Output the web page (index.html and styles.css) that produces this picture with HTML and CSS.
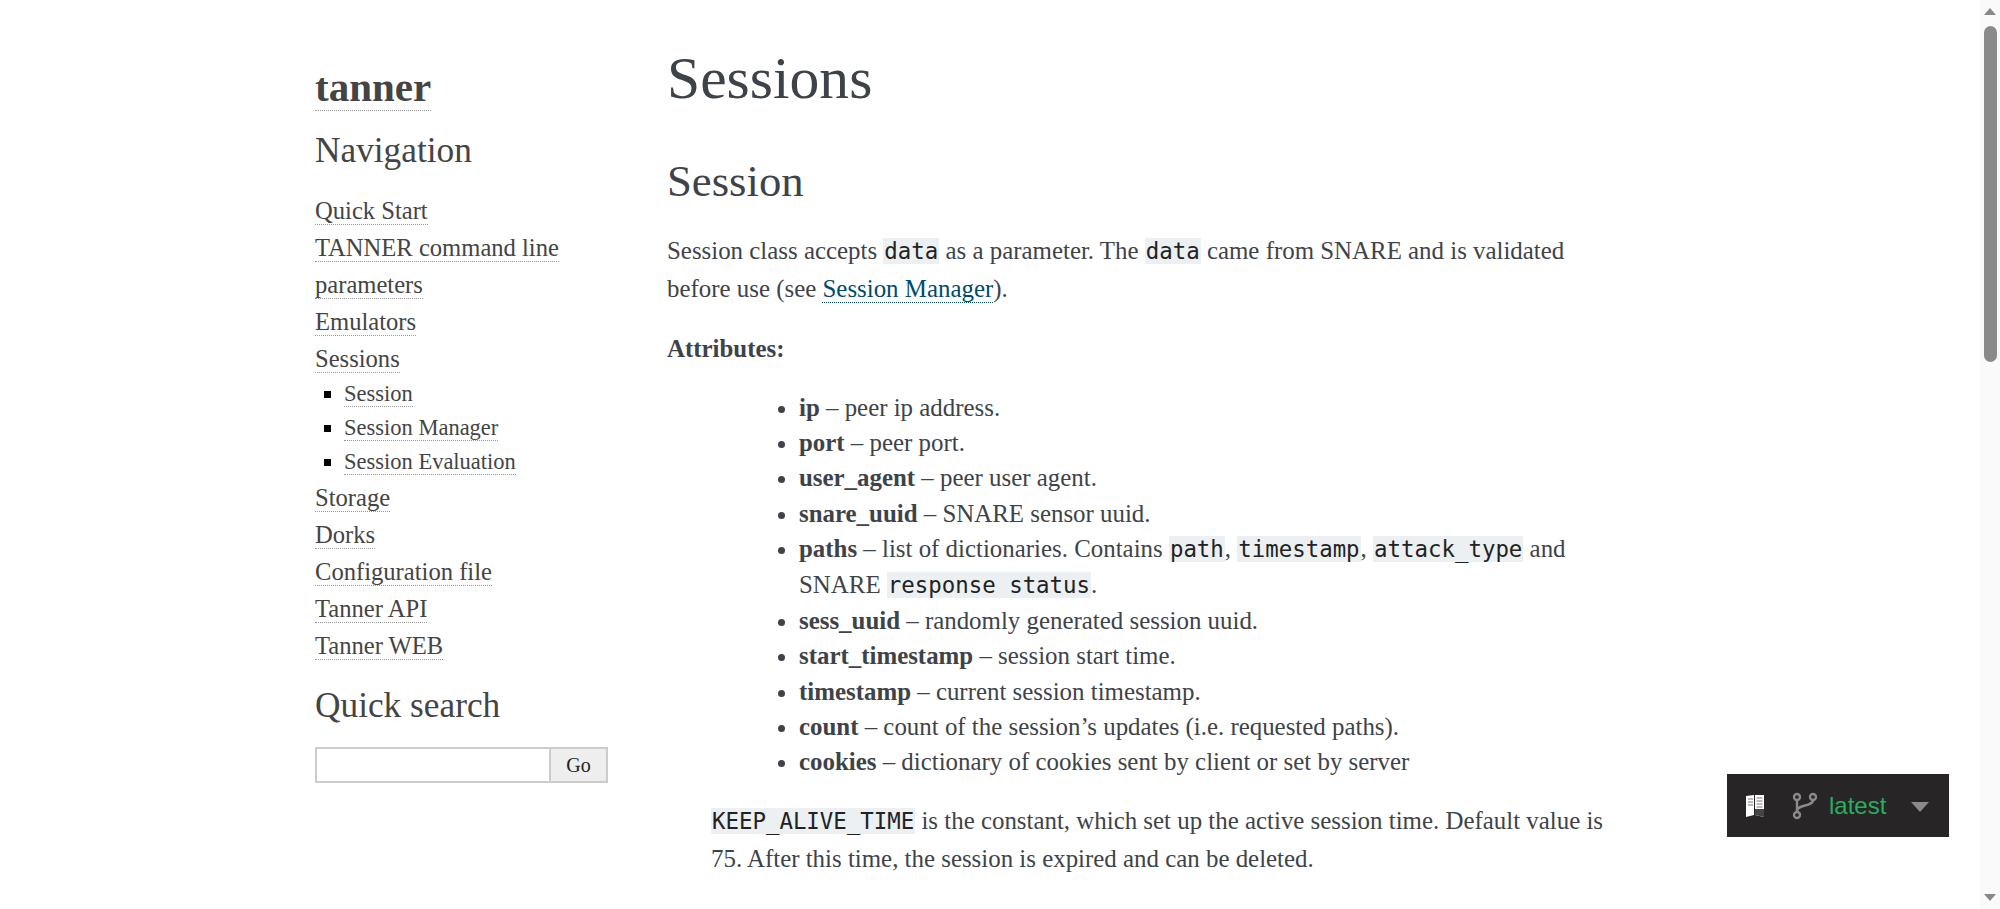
FILE: index.html
```html
<!DOCTYPE html>
<html lang="en">
  <head>
    <meta charset="UTF-8" />
    <title>Sessions — tanner</title>
    <link rel="stylesheet" href="styles.css">
  </head>
  <body>
    <div class="document">
      <div class="sidebar">
        <h1 class="logo"><a href="#">tanner</a></h1>
        <h3 class="nav-title">Navigation</h3>
        <ul class="nav">
          <li><a href="#">Quick Start</a></li>
          <li><a href="#">TANNER command line parameters</a></li>
          <li><a href="#">Emulators</a></li>
          <li>
            <a href="#">Sessions</a>
            <ul class="subnav">
              <li><a href="#">Session</a></li>
              <li><a href="#">Session Manager</a></li>
              <li><a href="#">Session Evaluation</a></li>
            </ul>
          </li>
          <li><a href="#">Storage</a></li>
          <li><a href="#">Dorks</a></li>
          <li><a href="#">Configuration file</a></li>
          <li><a href="#">Tanner API</a></li>
          <li><a href="#">Tanner WEB</a></li>
        </ul>
        <h3 class="search-title">Quick search</h3>
        <form class="search">
          <input type="text" />
          <button type="button">Go</button>
        </form>
      </div>
      <div class="body">
        <h1>Sessions</h1>
        <h2>Session</h2>
        <p>Session class accepts <code>data</code> as a parameter. The <code>data</code> came from SNARE and is validated before use (see <a class="ref" href="#">Session Manager</a>).</p>
        <p><strong>Attributes:</strong></p>
        <ul class="attrs">
          <li><strong>ip</strong> – peer ip address.</li>
          <li><strong>port</strong> – peer port.</li>
          <li><strong>user_agent</strong> – peer user agent.</li>
          <li><strong>snare_uuid</strong> – SNARE sensor uuid.</li>
          <li><strong>paths</strong> – list of dictionaries. Contains <code>path</code>, <code>timestamp</code>, <code>attack_type</code> and SNARE <code>response status</code>.</li>
          <li><strong>sess_uuid</strong> – randomly generated session uuid.</li>
          <li><strong>start_timestamp</strong> – session start time.</li>
          <li><strong>timestamp</strong> – current session timestamp.</li>
          <li><strong>count</strong> – count of the session’s updates (i.e. requested paths).</li>
          <li><strong>cookies</strong> – dictionary of cookies sent by client or set by server</li>
        </ul>
        <p class="note"><code>KEEP_ALIVE_TIME</code> is the constant, which set up the active session time. Default value is 75. After this time, the session is expired and can be deleted.</p>
      </div>
    </div>

    <div class="flyout">
      <svg class="icon-book" width="22" height="26" viewBox="0 0 22 26">
        <path d="M2 3 L10 2 V22 L2 24 Z" fill="#fff"/>
        <path d="M11 2 L20 2 V24 L11 22 Z" fill="#fff"/>
        <path d="M4 6h5M4 9h5M4 12h5M12.5 5h6M12.5 8h6M12.5 11h6M12.5 14h6" stroke="#777" stroke-width="1.2"/>
        <path d="M11 16 L20 16 V24 L11 22 Z" fill="#444"/>
      </svg>
      <svg class="icon-branch" width="26" height="28" viewBox="0 0 26 28" fill="none" stroke="#8a8a8a" stroke-width="2.4">
        <circle cx="5" cy="5" r="3"/>
        <circle cx="21" cy="5" r="3"/>
        <circle cx="5" cy="23" r="3"/>
        <path d="M5 8 V20"/>
        <path d="M21 8 C21 15 5 12 5 19"/>
      </svg>
      <span class="version">latest</span>
      <span class="caret"></span>
    </div>

    <div class="scrollbar">
      <span class="arrow-up"></span>
      <span class="thumb"></span>
      <span class="arrow-down"></span>
    </div>
  </body>
</html>
```

FILE: styles.css
```css
html,
body {
  height: 100%;
  overflow: hidden;
}
body {
  margin: 0;
  background-color: #fff;
  color: #3e4349;
  font-family: "Liberation Serif", serif;
  font-size: 24.9px;
}
a {
  color: #444;
  text-decoration: none;
  border-bottom: 1px dotted #999;
}
.document {
  display: flex;
  width: 1300px;
  margin-left: 315px;
}
.sidebar {
  width: 352px;
  flex: none;
  padding-top: 64px;
  color: #444;
  font-size: 24.6px;
}
.logo {
  margin: 0;
  font-size: 41px;
  line-height: 46px;
  font-weight: bold;
}
.nav-title,
.search-title {
  margin: 0;
  font-size: 35.3px;
  font-weight: normal;
  line-height: 40px;
}
.nav-title {
  margin-top: 21px;
}
.search-title {
  margin-top: 22px;
}
.nav,
.subnav {
  list-style: none;
  margin: 0;
  padding: 0;
}
.nav {
  margin-top: 21px;
  width: 260px;
  line-height: 37px;
}
.subnav {
  font-size: 22.5px;
  line-height: 34px;
  list-style: square;
  padding-left: 29px;
}
.subnav li::marker {
  color: #000;
}
.search {
  display: flex;
  width: 293px;
  margin-top: 21px;
}
.search input {
  flex: 1;
  min-width: 0;
  height: 36px;
  padding: 0;
  border: 2px solid #ccc;
  border-right: none;
  box-sizing: border-box;
}
.search button {
  width: 59px;
  height: 36px;
  padding: 0;
  border: 2px solid #ccc;
  background-color: #eee;
  color: #222;
  font-family: "Liberation Serif", serif;
  font-size: 20px;
}
.body {
  width: 980px;
  padding-top: 1px;
}
.body h1,
.body h2 {
  margin: 0;
  font-weight: normal;
}
.body h1 {
  font-size: 59.6px;
  line-height: 76px;
  margin-top: 39px;
}
.body h2 {
  font-size: 44.7px;
  line-height: 58px;
  margin-top: 36px;
}
.body p {
  margin: 0 0 23px;
  line-height: 37px;
}
.body h2 + p {
  margin-top: 22px;
}
code {
  font-family: "DejaVu Sans Mono", monospace;
  font-size: 22.4px;
  background-color: #ecf0f3;
  color: #222;
  padding: 0 1px;
}
.ref {
  color: #004b6b;
  border-bottom: 1px dotted #004b6b;
}
.attrs {
  margin: 0 0 23px;
  padding-left: 132px;
  line-height: 35.2px;
}
.note {
  margin-left: 44px !important;
}
.flyout {
  position: fixed;
  left: 1727px;
  top: 774px;
  width: 222px;
  height: 63px;
  box-sizing: border-box;
  display: flex;
  align-items: center;
  padding-left: 17px;
  background-color: #272525;
  font-family: "Liberation Sans", sans-serif;
  font-size: 24px;
}
.icon-branch {
  margin-left: 26px;
}
.version {
  margin-left: 11px;
  color: #27ae60;
}
.caret {
  margin-left: 25px;
  margin-top: 3px;
  border-left: 9px solid transparent;
  border-right: 9px solid transparent;
  border-top: 10px solid #8a8a8a;
}
.scrollbar {
  position: fixed;
  right: 0;
  top: 0;
  bottom: 0;
  width: 20px;
  background-color: #fafafa;
}
.arrow-up,
.arrow-down,
.thumb {
  position: absolute;
}
.arrow-up {
  left: 4px;
  top: 8px;
  border-left: 6px solid transparent;
  border-right: 6px solid transparent;
  border-bottom: 7px solid #888;
}
.arrow-down {
  left: 4px;
  bottom: 8px;
  border-left: 6px solid transparent;
  border-right: 6px solid transparent;
  border-top: 7px solid #888;
}
.thumb {
  left: 4px;
  top: 26px;
  width: 13px;
  height: 336px;
  border-radius: 7px;
  background-color: #8a8a8a;
}
```
